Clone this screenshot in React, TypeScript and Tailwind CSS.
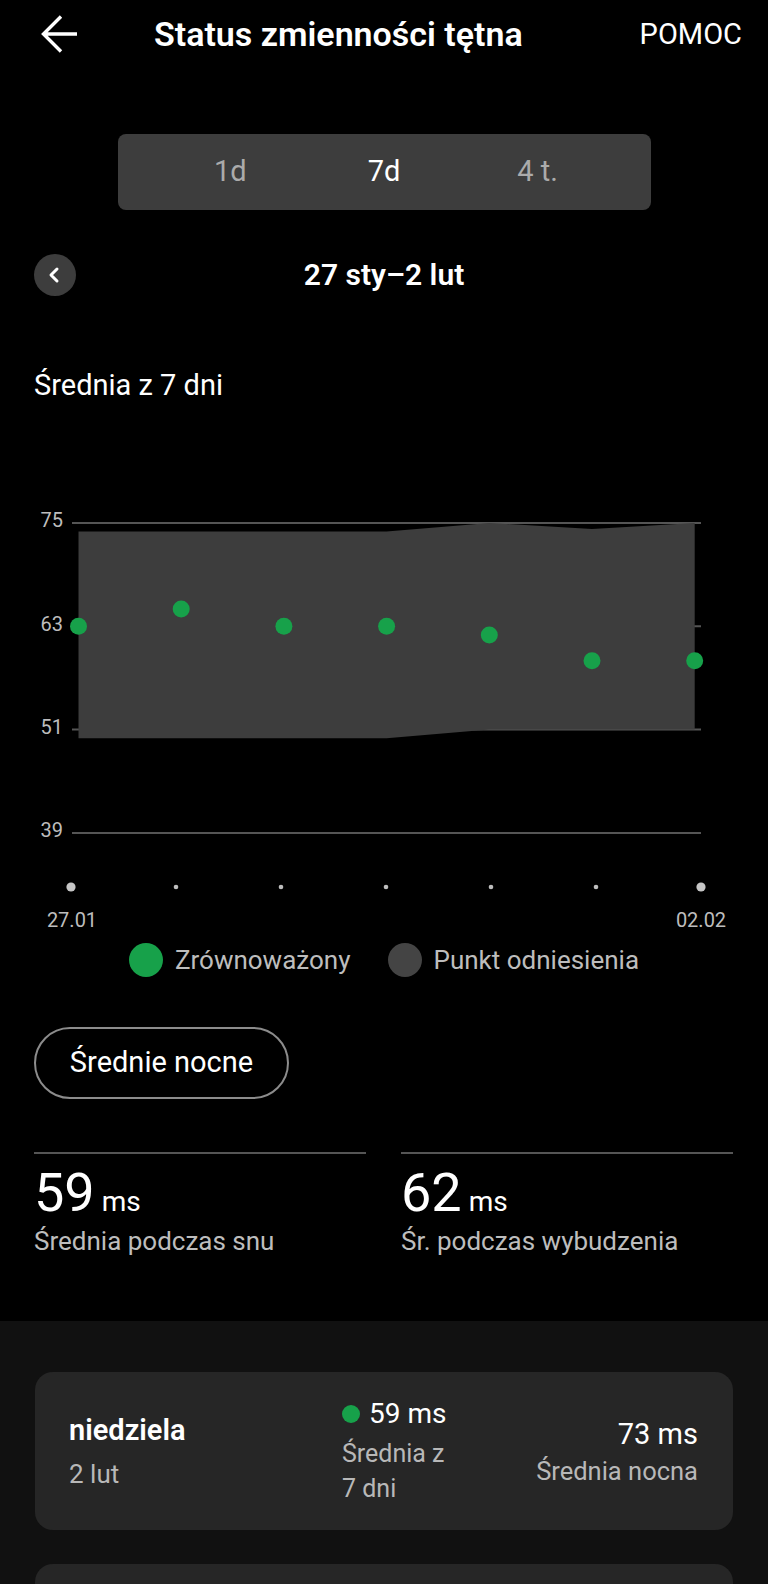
import { ChevronLeft } from 'lucide-react';

const GREEN = '#17a14a';

// chart geometry: value -> y, point index -> x
const Y_TOP = 523;
const Y_STEP = 103.3 / 12;
const yOf = (v: number) => Y_TOP + (75 - v) * Y_STEP;
const xOf = (i: number) => 78.5 + i * 102.7;

const AVERAGES = [63, 65, 63, 63, 62, 59, 59];
const BAND_TOP = [74, 74, 74, 74, 75, 74.3, 75];
const BAND_BOTTOM = [50, 50, 50, 50, 51, 51, 51];
const GRID = [75, 63, 51, 39];

function BackArrow() {
  return (
    <svg width="38" height="38" viewBox="0 0 38 38" fill="none">
      <path
        d="M20 1.5 L2.5 19 L20 36.5 M2.5 19 H36"
        stroke="white"
        strokeWidth="3.4"
        strokeLinejoin="miter"
      />
    </svg>
  );
}

function Chart() {
  const band =
    AVERAGES.map((_, i) => `${xOf(i)},${yOf(BAND_TOP[i])}`).join(' ') +
    ' ' +
    AVERAGES.map((_, i) => `${xOf(6 - i)},${yOf(BAND_BOTTOM[6 - i])}`).join(' ');

  return (
    <svg width="768" height="450" viewBox="0 490 768 450" className="block">
      {GRID.map((v) => (
        <g key={v}>
          <line x1="72" x2="701" y1={yOf(v)} y2={yOf(v)} stroke="#555555" strokeWidth="2" />
          <text
            x="63"
            y={yOf(v) - 1}
            textAnchor="end"
            dominantBaseline="middle"
            fontSize="20"
            fill="#bdbdbd"
          >
            {v}
          </text>
        </g>
      ))}
      <polygon points={band} fill="#3d3d3d" />
      {AVERAGES.map((v, i) => (
        <circle key={i} cx={xOf(i)} cy={yOf(v)} r="8.5" fill={GREEN} />
      ))}
      {[0, 1, 2, 3, 4, 5, 6].map((i) => {
        const big = i === 0 || i === 6;
        return (
          <circle
            key={i}
            cx={71 + i * 105}
            cy={887}
            r={big ? 4.6 : 2.3}
            fill={big ? '#c6c6c6' : '#bdbdbd'}
          />
        );
      })}
      <text x="72" y="922" textAnchor="middle" dominantBaseline="middle" fontSize="20" fill="#bdbdbd">
        27.01
      </text>
      <text x="701" y="922" textAnchor="middle" dominantBaseline="middle" fontSize="20" fill="#bdbdbd">
        02.02
      </text>
    </svg>
  );
}

function DayCard({
  day,
  date,
  avg,
  night,
}: {
  day: string;
  date: string;
  avg: string;
  night: string;
}) {
  return (
    <div className="h-[158px] rounded-[18px] bg-[#262626] flex items-center pl-[34px] pr-[35px]">
      <div className="w-[273px] flex-none">
        <div className="text-[29px] leading-[34px] font-semibold text-white">{day}</div>
        <div className="mt-[12px] text-[26px] leading-[30px] text-[#b8b8b8]">{date}</div>
      </div>
      <div className="w-[112px] flex-none">
        <div className="flex items-center h-[36px]">
          <span className="w-[18px] h-[18px] rounded-full flex-none" style={{ backgroundColor: GREEN }} />
          <span className="ml-[9px] text-[28px] leading-[36px] text-white whitespace-nowrap">{avg} ms</span>
        </div>
        <div className="mt-[4px] text-[25px] leading-[35px] text-[#b8b8b8]">Średnia z 7 dni</div>
      </div>
      <div className="flex-1 text-right">
        <div className="text-[29px] leading-[36px] text-white">{night} ms</div>
        <div className="mt-[4px] text-[25.5px] leading-[30px] text-[#b8b8b8]">Średnia nocna</div>
      </div>
    </div>
  );
}

export default function App() {
  return (
    <div className="w-[768px] h-[1584px] overflow-hidden bg-black text-white font-['Roboto','Noto_Sans',sans-serif]">
      {/* Header */}
      <header className="h-[68px] flex items-center">
        <div className="ml-[41px] flex-none">
          <BackArrow />
        </div>
        <h1 className="ml-[75px] text-[34px] font-semibold leading-none whitespace-nowrap">
          Status zmienności tętna
        </h1>
        <button type="button" className="ml-auto mr-[26px] text-[29px] leading-none">
          POMOC
        </button>
      </header>

      {/* Period switch */}
      <div className="mt-[66px] mx-auto w-[533px] h-[76px] rounded-[8px] bg-[#3d3d3d] grid grid-cols-3 items-center px-[36px] text-center text-[29px]">
        <span className="text-[#ababab]">1d</span>
        <span className="text-white">7d</span>
        <span className="text-[#ababab]">4 t.</span>
      </div>

      {/* Date navigation */}
      <div className="mt-[44px] h-[42px] px-[34px] grid grid-cols-[1fr_auto_1fr] items-center">
        <button
          type="button"
          className="w-[42px] h-[42px] rounded-full bg-[#3d3d3d] flex items-center justify-center"
        >
          <ChevronLeft size={24} strokeWidth={3} className="-ml-[2px]" />
        </button>
        <div className="text-[30px] font-semibold leading-none whitespace-nowrap">27 sty–2 lut</div>
        <div />
      </div>

      <div className="mt-[71px] px-[34px] text-[29px] leading-[36px]">Średnia z 7 dni</div>

      <div className="mt-[87px]">
        <Chart />
      </div>

      {/* Legend */}
      <div className="mt-[3px] h-[34px] flex items-center justify-center text-[26px] text-[#bdbdbd]">
        <span className="w-[34px] h-[34px] rounded-full" style={{ backgroundColor: GREEN }} />
        <span className="ml-[12px]">Zrównoważony</span>
        <span className="ml-[37px] w-[34px] h-[34px] rounded-full bg-[#444444]" />
        <span className="ml-[12px]">Punkt odniesienia</span>
      </div>

      <button
        type="button"
        className="mt-[50px] ml-[34px] w-[255px] h-[72px] rounded-full border-2 border-[#8c8c8c] text-[29px] flex items-center justify-center"
      >
        Średnie nocne
      </button>

      {/* Sleep / awake averages */}
      <div className="mt-[53px] pl-[34px] pr-[35px] grid grid-cols-2 gap-[35px]">
        {[
          { value: '59', label: 'Średnia podczas snu' },
          { value: '62', label: 'Śr. podczas wybudzenia' },
        ].map((s) => (
          <div key={s.label} className="border-t-2 border-[#555555]">
            <div className="pt-[12px] flex items-baseline">
              <span className="text-[54px] leading-[54px]">{s.value}</span>
              <span className="ml-[7px] text-[28px]">ms</span>
            </div>
            <div className="mt-[2px] text-[26px] leading-[32px] text-[#bdbdbd] whitespace-nowrap">{s.label}</div>
          </div>
        ))}
      </div>

      {/* Daily list */}
      <div className="mt-[64px] bg-[#111111] pt-[51px] px-[35px] pb-[40px] flex flex-col gap-[34px]">
        <DayCard day="niedziela" date="2 lut" avg="59" night="73" />
        {/* next day's card, only its top edge shows on screen */}
        <div className="h-[158px] rounded-[18px] bg-[#262626]" />
      </div>
    </div>
  );
}
